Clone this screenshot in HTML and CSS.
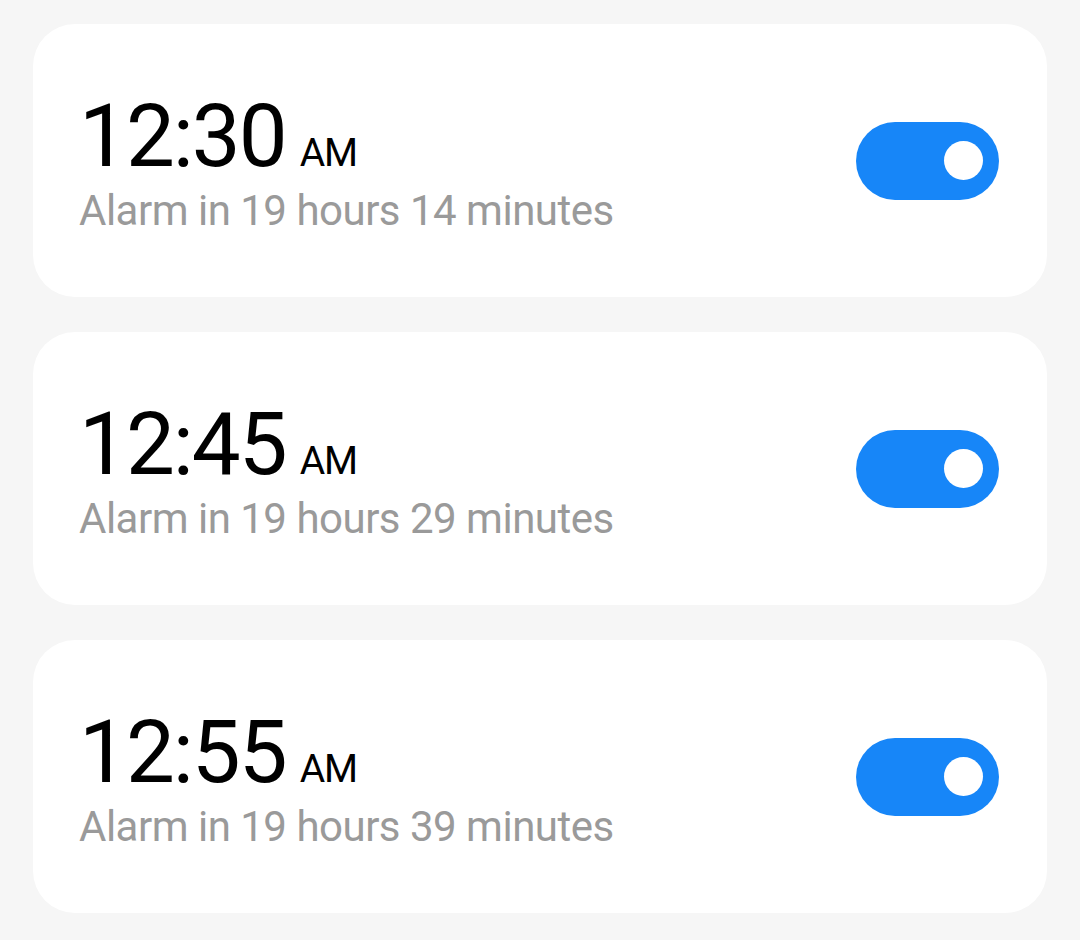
FILE: index.html
```html
<!DOCTYPE html>
<html>
<head>
<meta charset="utf-8">
<link rel="stylesheet" href="styles.css">
</head>
<body>
<div class="list">
  <div class="card">
    <div class="info">
      <div class="time"><span class="clock">12:30</span><span class="ampm">AM</span></div>
      <div class="sub">Alarm in 19 hours 14 minutes</div>
    </div>
    <div class="toggle"><div class="knob"></div></div>
  </div>
  <div class="card">
    <div class="info">
      <div class="time"><span class="clock">12:45</span><span class="ampm">AM</span></div>
      <div class="sub">Alarm in 19 hours 29 minutes</div>
    </div>
    <div class="toggle"><div class="knob"></div></div>
  </div>
  <div class="card">
    <div class="info">
      <div class="time"><span class="clock">12:55</span><span class="ampm">AM</span></div>
      <div class="sub">Alarm in 19 hours 39 minutes</div>
    </div>
    <div class="toggle"><div class="knob"></div></div>
  </div>
</div>
</body>
</html>
```
FILE: styles.css
```css
html, body {
  margin: 0;
  padding: 0;
  background: #f6f6f6;
  font-family: Roboto, "Liberation Sans", sans-serif;
}
.list {
  display: flex;
  flex-direction: column;
  gap: 35px;
  padding: 24px 33px 0 33px;
}
.card {
  height: 273px;
  background: #ffffff;
  border-radius: 42px;
  display: flex;
  align-items: center;
  justify-content: space-between;
  padding: 0 48px 0 46px;
  box-sizing: border-box;
}
.info {
  display: flex;
  flex-direction: column;
  gap: 10px;
  padding-top: 4px;
}
.time {
  line-height: 1;
  color: #000;
  white-space: nowrap;
}
.clock {
  font-size: 87px;
  line-height: 1;
  letter-spacing: -2px;
}
.ampm {
  font-size: 39px;
  line-height: 1;
  margin-left: 14px;
  letter-spacing: -1px;
}
.sub {
  font-size: 42px;
  line-height: 1;
  color: #9a9a9a;
  white-space: nowrap;
  letter-spacing: -0.5px;
}
.toggle {
  width: 143px;
  height: 78px;
  border-radius: 39px;
  background: #1786f8;
  display: flex;
  align-items: center;
  justify-content: flex-end;
  padding-right: 16px;
  box-sizing: border-box;
}
.knob {
  width: 39px;
  height: 39px;
  border-radius: 50%;
  background: #fff;
}
```
